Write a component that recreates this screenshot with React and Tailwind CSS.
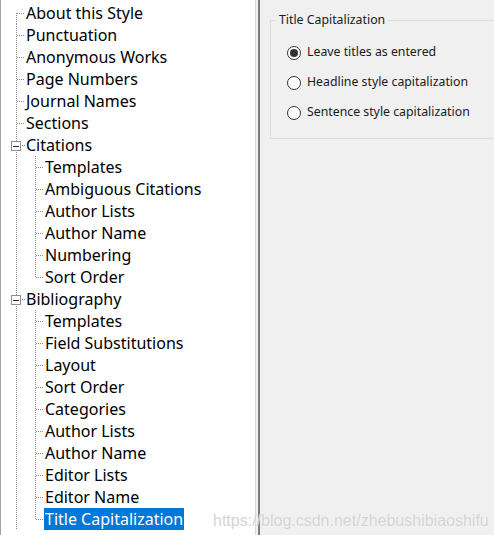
import { useState } from "react";

const items = [
  { label: "About this Style", level: 0, first: true },
  { label: "Punctuation", level: 0 },
  { label: "Anonymous Works", level: 0 },
  { label: "Page Numbers", level: 0 },
  { label: "Journal Names", level: 0 },
  { label: "Sections", level: 0 },
  { label: "Citations", level: 0, parent: true },
  { label: "Templates", level: 1 },
  { label: "Ambiguous Citations", level: 1 },
  { label: "Author Lists", level: 1 },
  { label: "Author Name", level: 1 },
  { label: "Numbering", level: 1 },
  { label: "Sort Order", level: 1, last: true },
  { label: "Bibliography", level: 0, parent: true },
  { label: "Templates", level: 1 },
  { label: "Field Substitutions", level: 1 },
  { label: "Layout", level: 1 },
  { label: "Sort Order", level: 1 },
  { label: "Categories", level: 1 },
  { label: "Author Lists", level: 1 },
  { label: "Author Name", level: 1 },
  { label: "Editor Lists", level: 1 },
  { label: "Editor Name", level: 1 },
  { label: "Title Capitalization", level: 1, last: true },
];

const options = [
  "Leave titles as entered",
  "Headline style capitalization",
  "Sentence style capitalization",
];

// dotted connector lines of the tree
const Dot = (props) => (
  <line stroke="#8a8a8a" strokeDasharray="1 1" shapeRendering="crispEdges" {...props} />
);

const Guide = ({ item }) => {
  if (item.level === 0) {
    return (
      <svg width="24" height="22" className="shrink-0">
        <Dot x1="15.5" y1={item.first ? 11 : 0} x2="15.5" y2="22" />
        {item.parent ? (
          <>
            <rect x="10.5" y="7.5" width="9" height="9" fill="#fff" stroke="#919191" shapeRendering="crispEdges" />
            <line x1="12" y1="12" x2="18" y2="12" stroke="#2b2b2b" shapeRendering="crispEdges" />
            <Dot x1="21" y1="11.5" x2="24" y2="11.5" />
          </>
        ) : (
          <Dot x1="16" y1="11.5" x2="24" y2="11.5" />
        )}
      </svg>
    );
  }
  return (
    <svg width="43" height="22" className="shrink-0">
      <Dot x1="15.5" y1="0" x2="15.5" y2="22" />
      <Dot x1="34.5" y1="0" x2="34.5" y2={item.last ? 12 : 22} />
      <Dot x1="35" y1="11.5" x2="43" y2="11.5" />
    </svg>
  );
};

const App = () => {
  const [selected, setSelected] = useState(23);
  const [choice, setChoice] = useState(0);

  return (
    <div className="relative flex h-[535px] w-[494px] overflow-hidden bg-[#f0f0f0]">
      {/* tree */}
      <div className="flex w-[256px] shrink-0 flex-col border-l border-r border-l-[#a0a0a0] border-r-[#dadada] bg-white pt-[2px] font-['Noto_Sans',sans-serif] text-[16px] text-black">
        {items.map((item, i) => (
          <div key={i} className="flex h-[22px] items-center" onClick={() => setSelected(i)}>
            <Guide item={item} />
            <span
              className={`flex h-[22px] items-center whitespace-nowrap pl-[1px] pr-[1px] leading-none ${
                selected === i ? "bg-[#0078d7] text-white" : ""
              }`}
            >
              {item.label}
            </span>
          </div>
        ))}
      </div>

      {/* settings */}
      <div className="ml-[2px] flex-1 border-l-2 border-[#7d7d7d] pl-[10px] pt-[13px]">
        <fieldset className="h-[126px] w-[260px] border border-[#dcdcdc] pl-[5px] font-['Noto_Sans',sans-serif] text-[12.3px] text-[#1a1a1a]">
          <legend className="px-[3px] leading-[14px]">Title Capitalization</legend>
          <div className="flex flex-col gap-[17px] pl-[11px] pt-[19px]">
            {options.map((opt, i) => (
              <label key={opt} className="flex h-[13px] cursor-default items-center gap-[6px]" onClick={() => setChoice(i)}>
                <span className="flex h-[14px] w-[14px] items-center justify-center rounded-full border border-[#333] bg-white">
                  {choice === i && <span className="h-[8px] w-[8px] rounded-full bg-[#333]" />}
                </span>
                <span className="whitespace-nowrap leading-none">{opt}</span>
              </label>
            ))}
          </div>
        </fieldset>
      </div>

      {/* watermark */}
      <div className="pointer-events-none absolute left-[213px] top-[509px] whitespace-nowrap font-['Liberation_Sans',Arial,sans-serif] text-[16px] text-[#c8c8c8]/80 [text-shadow:0_0_1px_#fff]">
        https://blog.csdn.net/zhebushibiaoshifu
      </div>
    </div>
  );
};

export default App;
